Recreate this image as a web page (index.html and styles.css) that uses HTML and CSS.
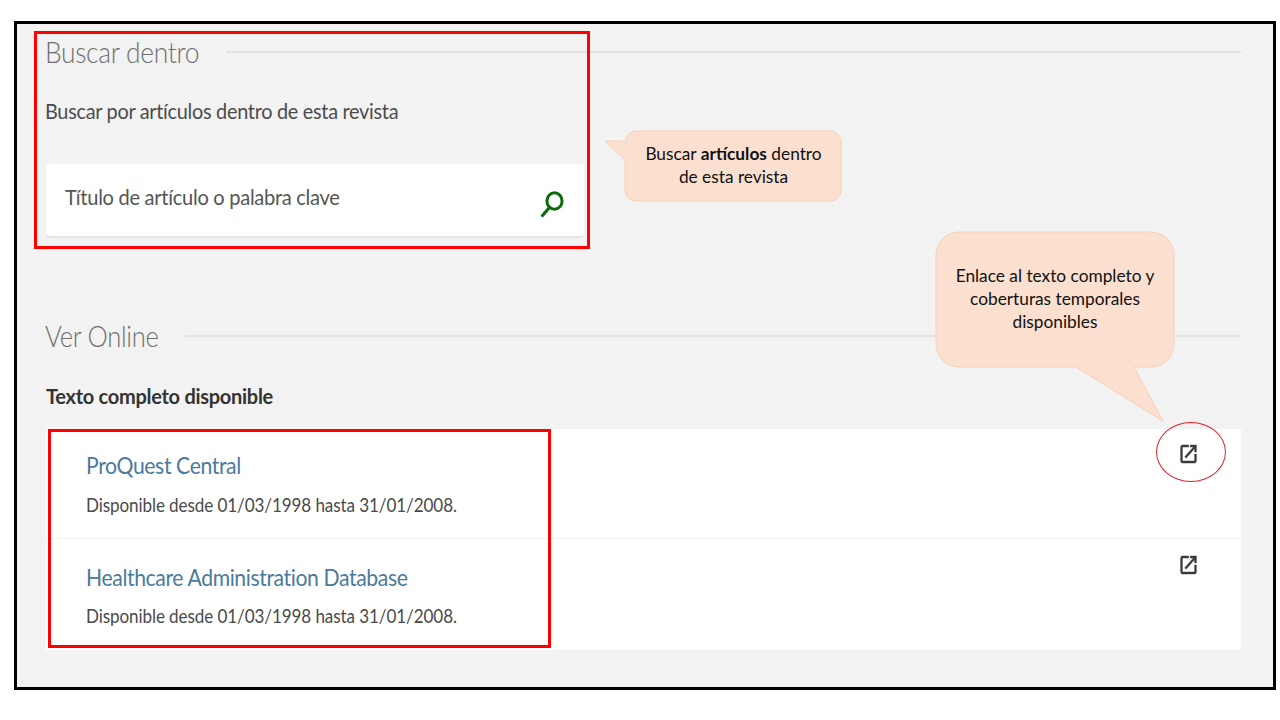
FILE: index.html
```html
<!DOCTYPE html>
<html lang="es">
<head>
<meta charset="utf-8">
<title>Buscar dentro</title>
<link rel="stylesheet" href="styles.css">
</head>
<body>
<main class="frame">
  <section class="section-head">
    <h2 class="heading">Buscar dentro</h2>
    <span class="rule"></span>
  </section>
  <p class="desc">Buscar por artículos dentro de esta revista</p>
  <div class="search">
    <span class="placeholder">Título de artículo o palabra clave</span>
    <svg class="search-icon" viewBox="0 0 24 28" aria-hidden="true">
      <ellipse cx="14.5" cy="11" rx="7.6" ry="8.2" fill="none" stroke="#0b6b0b" stroke-width="3"/>
      <path d="M9 18 2.5 25.5" fill="none" stroke="#0b6b0b" stroke-width="3.2" stroke-linecap="round"/>
    </svg>
  </div>

  <section class="section-head online">
    <h2 class="heading">Ver Online</h2>
    <span class="rule"></span>
  </section>
  <h3 class="subhead">Texto completo disponible</h3>
  <div class="list">
    <article class="row">
      <div class="row-body">
        <a class="link">ProQuest Central</a>
        <p class="meta">Disponible desde 01/03/1998 hasta 31/01/2008.</p>
      </div>
      <svg class="ext" viewBox="0 0 24 24" preserveAspectRatio="none" aria-hidden="true"><path d="M19 19H5V5h7V3H5a2 2 0 0 0-2 2v14a2 2 0 0 0 2 2h14c1.100 0 2-.9 2-2v-7h-2v7zM14 3v2h3.590l-9.830 9.830 1.410 1.410L19 6.410V10h2V3h-7z"/></svg>
    </article>
    <article class="row">
      <div class="row-body">
        <a class="link">Healthcare Administration Database</a>
        <p class="meta second">Disponible desde 01/03/1998 hasta 31/01/2008.</p>
      </div>
      <svg class="ext" viewBox="0 0 24 24" preserveAspectRatio="none" aria-hidden="true"><path d="M19 19H5V5h7V3H5a2 2 0 0 0-2 2v14a2 2 0 0 0 2 2h14c1.100 0 2-.9 2-2v-7h-2v7zM14 3v2h3.590l-9.830 9.830 1.410 1.410L19 6.410V10h2V3h-7z"/></svg>
    </article>
  </div>

  <div class="mark mark-search"></div>
  <div class="mark mark-list"></div>
  <div class="mark-ring"></div>

  <div class="bubble bubble-small">
    <svg class="bubble-shape" viewBox="0 0 238 72" aria-hidden="true">
      <path d="M32 1H226a11 11 0 0 1 11 11V60a11 11 0 0 1-11 11H32a11 11 0 0 1-11-11V30L1 11H21.500A11 11 0 0 1 32 1z"/>
    </svg>
    <p class="bubble-text">Buscar <b>artículos</b> dentro<br>de esta revista</p>
  </div>
  <div class="bubble bubble-large">
    <svg class="bubble-shape" viewBox="0 0 240 192" aria-hidden="true">
      <path d="M24 1H216a23 23 0 0 1 23 23V113a23 23 0 0 1-23 23H199L228 190 141 136H24a23 23 0 0 1-23-23V24A23 23 0 0 1 24 1z"/>
    </svg>
    <p class="bubble-text">Enlace al texto completo y<br>coberturas temporales<br>disponibles</p>
  </div>
</main>
</body>
</html>
```
FILE: styles.css
```css
* { box-sizing: border-box; }
html, body { margin: 0; height: 100%; background: #fff; }
body { font-family: "Lato", "Liberation Sans", sans-serif; overflow: hidden; }

.frame {
  position: relative;
  width: 1262px;
  height: 669px;
  margin: 21px 0 0 14px;
  padding: 9px 32px 0 29px;
  border: 3px solid #000;
  background-color: #f2f2f2;
  background-image: conic-gradient(#f0f0f0 25%, #f5f5f5 0 50%, #f0f0f0 0 75%, #f5f5f5 0);
  background-size: 2px 2px;
}

.section-head { display: flex; align-items: center; gap: 27px; height: 40px; }
.section-head.online { margin-top: 81px; }
.heading {
  margin: 0 -15px 0 -1px;
  padding-bottom: 2px;
  font-size: 29px;
  font-weight: 300;
  line-height: 40px;
  letter-spacing: -.35px;
  color: #6f6f6f;
  white-space: nowrap;
  transform: scaleX(.91);
  transform-origin: left center;
}
.online .heading { margin-right: -16px; transform: scaleX(.883); }
.rule { flex: 1; height: 2px; margin-bottom: 3px; background: #e2e3e3; }

.desc {
  margin: 23px 0 0 -1px;
  font-size: 21px;
  line-height: 30px;
  letter-spacing: -.3px;
  color: #4c4c4c;
  transform: scaleX(.946);
  transform-origin: left center;
}

.search {
  display: flex;
  align-items: center;
  justify-content: space-between;
  width: 538px;
  height: 72px;
  margin-top: 38px;
  padding: 0 20px 0 19px;
  border-radius: 4px;
  background: #fff;
  box-shadow: 0 2px 1px #e6e6e6;
}
.placeholder {
  margin-top: -8px;
  font-size: 21px;
  letter-spacing: -.3px;
  color: #555;
  transform: scaleX(.955);
  transform-origin: left center;
}
.search-icon { width: 24px; height: 28px; margin-top: 8px; }

.subhead {
  margin: 24px 0 0;
  font-size: 20px;
  font-weight: 700;
  line-height: 30px;
  letter-spacing: -.28px;
  color: #333;
}

.list { margin-top: 18px; background: #fff; }
.row {
  display: flex;
  justify-content: space-between;
  height: 110px;
  padding: 21px 44px 0 40px;
  border-bottom: 1px solid #f1f1f1;
}
.row + .row { height: 111px; padding-top: 23px; border-bottom: 0; }
.row-body { flex: 1; }
.link {
  display: block;
  font-size: 24px;
  line-height: 30px;
  letter-spacing: -.45px;
  color: #4a7a9c;
  transform: scaleX(.883);
  transform-origin: left center;
}
.meta {
  margin: 10px 0 0;
  font-size: 19px;
  line-height: 30px;
  letter-spacing: -.1px;
  color: #4a4a4a;
  transform: scaleX(.898);
  transform-origin: left center;
}
.meta.second { margin-top: 9px; }
.ext { width: 21px; height: 24px; margin: -8px -2px 0 0; fill: #3a3a3a; stroke: #3a3a3a; stroke-width: .5; }
.row + .row .ext { margin-top: -9px; }

.mark { position: absolute; border: 3px solid #f00; }
.mark-search { left: 17px; top: 7px; width: 556px; height: 218px; }
.mark-list { left: 31px; top: 405px; width: 503px; height: 219px; }
.mark-ring {
  position: absolute;
  left: 1139px;
  top: 398px;
  width: 70px;
  height: 60px;
  border: 1px solid #e8212b;
  border-radius: 50%;
}

.bubble { position: absolute; color: #111; }
.bubble-shape { position: absolute; inset: 0; width: 100%; height: 100%; }
.bubble-shape path { fill: #fce0cf; stroke: #f8cfb4; stroke-width: 1; }
.bubble-text {
  position: relative;
  margin: 0;
  font-size: 17.300px;
  line-height: 23px;
  text-align: center;
}
.bubble-small { left: 587px; top: 106px; width: 238px; height: 72px; }
.bubble-small .bubble-text { padding: 12px 0 0 21px; }
.bubble-large { left: 918px; top: 207px; width: 240px; height: 192px; }
.bubble-large .bubble-text { padding-top: 33px; }
```
